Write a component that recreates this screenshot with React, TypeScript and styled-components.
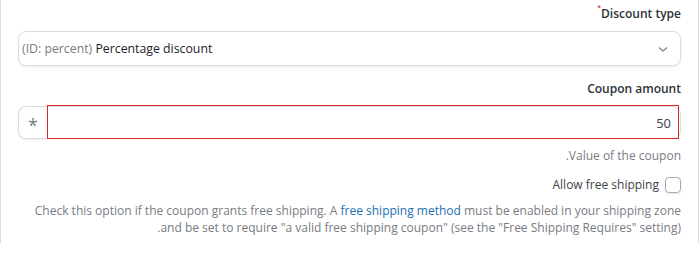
import React from "react";
import styled, { createGlobalStyle } from "styled-components";

const GlobalStyle = createGlobalStyle`
  html, body {
    margin: 0;
    padding: 0;
    background: #fff;
  }
  body {
    font-family: "Open Sans", "Noto Sans", sans-serif;
    font-size: 12px;
    color: #3c434a;
  }
`;

const Panel = styled.div`
  direction: rtl;
  width: 699px;
  height: 243px;
  box-sizing: border-box;
  border-left: 1px solid #dcdcde;
  border-right: 1px solid #dcdcde;
  padding: 4px 17px 0 17px;
  display: flex;
  flex-direction: column;
`;

const Field = styled.div<{ $gap?: number }>`
  display: flex;
  flex-direction: column;
  margin-top: ${(p) => p.$gap ?? 0}px;
`;

const Label = styled.label`
  font-weight: 600;
  font-size: 12px;
  color: #2c3338;
  line-height: 20px;
  margin-bottom: 7px;
`;

const Required = styled.span`
  color: #d63638;
  font-size: 7px;
  vertical-align: top;
  line-height: 7px;
  margin-left: 1px;
`;

const SelectBox = styled.div`
  height: 35px;
  box-sizing: border-box;
  border: 1px solid #dcdcde;
  border-radius: 8px;
  box-shadow: 0 1px 2px rgba(0, 0, 0, 0.08);
  display: flex;
  align-items: center;
  justify-content: space-between;
  padding: 0 12px 0 3px;
`;

const SelectText = styled.span`
  direction: ltr;
  order: 2;
  color: #1d2327;
  font-size: 12.3px;
`;

const Muted = styled.span`
  color: #787c82;
`;

const Chevron = styled.svg`
  order: 1;
  width: 10px;
  height: 10px;
`;

const InputGroup = styled.div`
  display: flex;
  height: 33px;
  margin-bottom: 8px;
`;

const Input = styled.div`
  position: relative;
  flex: 1;
  box-sizing: border-box;
  border: 1px solid #dcdcde;
  border-top-right-radius: 8px;
  border-bottom-right-radius: 8px;
  display: flex;
  align-items: center;
  padding: 0 9px;
  color: #3c434a;
  font-size: 13px;

  &::after {
    content: "";
    position: absolute;
    top: -2px;
    bottom: -1px;
    left: -1px;
    right: 1px;
    border: 1px solid #e0262b;
    pointer-events: none;
  }
`;

const Addon = styled.div`
  width: 29px;
  box-sizing: border-box;
  border: 1px solid #dcdcde;
  border-right: none;
  border-top-left-radius: 8px;
  border-bottom-left-radius: 8px;
  box-shadow: 0 1px 2px rgba(0, 0, 0, 0.08);
  display: flex;
  align-items: center;
  justify-content: center;
  color: #787c82;
  font-size: 18px;
  padding-top: 4px;
`;

const Help = styled.p`
  margin: 0;
  color: #787c82;
  line-height: 17px;
`;

const CheckRow = styled.label`
  display: flex;
  align-items: center;
  gap: 6px;
  margin: 12px 0 9px;
  color: #3c434a;
`;

const CheckBox = styled.span`
  width: 16px;
  height: 16px;
  box-sizing: border-box;
  border: 1px solid #a7aaad;
  border-radius: 4px;
  box-shadow: 0 1px 2px rgba(0, 0, 0, 0.1);
`;

const Link = styled.a`
  color: #2271b1;
  text-decoration: none;
`;

export default function App() {
  return (
    <>
      <GlobalStyle />
      <Panel>
        <Field>
          <Label>
            Discount type<Required>*</Required>
          </Label>
          <SelectBox>
            <SelectText>
              <Muted>(ID: percent)</Muted> Percentage discount
            </SelectText>
            <Chevron viewBox="0 0 10 10">
              <path d="M1 3.5 L5 7 L9 3.5" fill="none" stroke="#787c82" strokeWidth="1.1" />
            </Chevron>
          </SelectBox>
        </Field>
        <Field $gap={13}>
          <Label>Coupon amount</Label>
          <InputGroup>
            <Input>50</Input>
            <Addon>*</Addon>
          </InputGroup>
          <Help>Value of the coupon.</Help>
        </Field>
        <CheckRow>
          <CheckBox />
          Allow free shipping
        </CheckRow>
        <Help>
          Check this option if the coupon grants free shipping. A{" "}
          <Link href="#">free shipping method</Link> must be enabled in your shipping zone and be set
          to require "a valid free shipping coupon" (see the "Free Shipping Requires" setting){"\u200E"}.
        </Help>
      </Panel>
    </>
  );
}
